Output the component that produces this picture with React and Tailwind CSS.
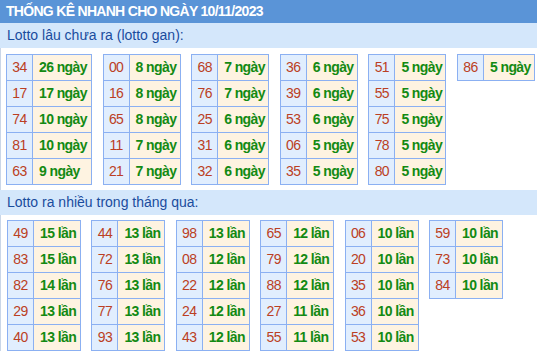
import React from "react";

const gan = [
  [["34","26 ngày"],["17","17 ngày"],["74","10 ngày"],["81","10 ngày"],["63","9 ngày"]],
  [["00","8 ngày"],["16","8 ngày"],["65","8 ngày"],["11","7 ngày"],["21","7 ngày"]],
  [["68","7 ngày"],["76","7 ngày"],["25","6 ngày"],["31","6 ngày"],["32","6 ngày"]],
  [["36","6 ngày"],["39","6 ngày"],["53","6 ngày"],["06","5 ngày"],["35","5 ngày"]],
  [["51","5 ngày"],["55","5 ngày"],["75","5 ngày"],["78","5 ngày"],["80","5 ngày"]],
  [["86","5 ngày"]],
];

const nhieu = [
  [["49","15 lần"],["83","15 lần"],["82","14 lần"],["29","13 lần"],["40","13 lần"]],
  [["44","13 lần"],["72","13 lần"],["76","13 lần"],["77","13 lần"],["93","13 lần"]],
  [["98","13 lần"],["08","12 lần"],["22","12 lần"],["24","12 lần"],["43","12 lần"]],
  [["65","12 lần"],["79","12 lần"],["88","12 lần"],["27","11 lần"],["55","11 lần"]],
  [["06","10 lần"],["20","10 lần"],["35","10 lần"],["36","10 lần"],["53","10 lần"]],
  [["59","10 lần"],["73","10 lần"],["84","10 lần"]],
];

function Tbl({ rows, vw }) {
  return (
    <table className="border-collapse self-start text-[14px] leading-[15px] tracking-[-0.6px]">
      <tbody>
        {rows.map(([n, v], i) => (
          <tr key={i}>
            <td className="border border-[#8bb0f2] bg-[#e1eefe] p-0 text-[#bb3f24]">
              <div className="w-[25px] h-[25px] flex items-center justify-center">{n}</div>
            </td>
            <td className="border border-[#8bb0f2] bg-[#fef3e1] p-0 font-bold text-[#138a13] whitespace-nowrap">
              <div className={"h-[25px] flex items-center pl-[6px] " + vw}>{v}</div>
            </td>
          </tr>
        ))}
      </tbody>
    </table>
  );
}

export default function App() {
  return (
    <div className="w-[537px] h-[353px] overflow-hidden bg-white" style={{ fontFamily: '"Liberation Sans", Arial, sans-serif' }}>
      <div className="h-[23px] bg-[#5a94d7] pl-[6px] text-[14px] leading-[23px] font-bold tracking-[-0.7px] text-white whitespace-nowrap">
        THỐNG KÊ NHANH CHO NGÀY 10/11/2023
      </div>
      <div className="h-[25px] bg-[#d4e7fb] pl-[7px] text-[14px] leading-[25px] text-[#1a4c9e]">
        Lotto lâu chưa ra (lotto gan):
      </div>
      <div className="border-l border-[#c9d6e8] pt-[6px] pb-[5px] pl-[5px] flex gap-[10.6px]">
        {gan.map((r, i) => <Tbl key={i} rows={r} vw={i === 0 ? "w-[58px]" : "w-[50px]"} />)}
      </div>
      <div className="h-[25px] bg-[#d4e7fb] pl-[7px] text-[14px] leading-[25px] text-[#1a4c9e]">
        Lotto ra nhiều trong tháng qua:
      </div>
      <div className="border-l border-[#c9d6e8] pt-[5px] pl-[6px] flex gap-[10.4px]">
        {nhieu.map((r, i) => <Tbl key={i} rows={r} vw="w-[46px]" />)}
      </div>
    </div>
  );
}
